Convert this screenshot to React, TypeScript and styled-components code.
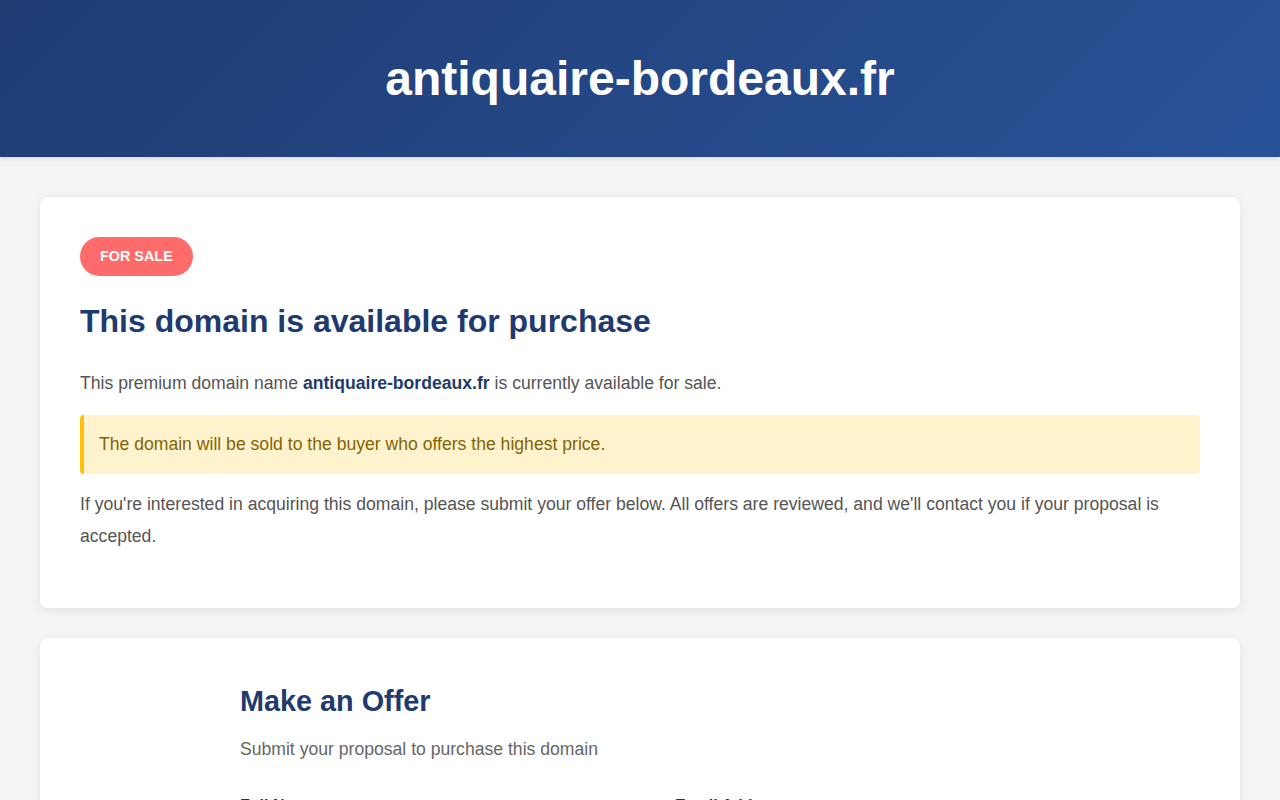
import React from "react";
import styled, { createGlobalStyle } from "styled-components";

const Global = createGlobalStyle`
  * { box-sizing: border-box; }
  body {
    margin: 0;
    background: #f4f4f4;
    font-family: "Liberation Sans", Arial, Helvetica, sans-serif;
    color: #333;
    line-height: 1.6;
  }
`;

const Header = styled.header`
  background: linear-gradient(135deg, #1e3c72 0%, #2a5298 100%);
  color: #fff;
  height: 157px;
  display: flex;
  align-items: center;
  justify-content: center;
  box-shadow: 0 2px 4px rgba(0, 0, 0, 0.1);
`;

const SiteTitle = styled.h1`
  margin: 0;
  font-size: 48px;
  font-weight: 700;
  line-height: 1.2;
`;

const Main = styled.main`
  max-width: 1280px;
  margin: 0 auto;
  padding: 40px 40px;
  display: flex;
  flex-direction: column;
  gap: 30px;
`;

const Card = styled.section`
  background: #fff;
  border-radius: 8px;
  box-shadow: 0 2px 10px rgba(0, 0, 0, 0.08);
  padding: 40px;
`;

const Badge = styled.span`
  display: inline-block;
  background: #ff6b6b;
  color: #fff;
  font-size: 14.4px;
  font-weight: 700;
  line-height: 18.7px;
  padding: 10px 20px;
  border-radius: 20px;
`;

const Heading = styled.h2`
  margin: 20px 0 21px;
  font-size: 32px;
  font-weight: 700;
  line-height: 1.6;
  color: #1e3a6e;
`;

const Text = styled.p`
  margin: 0 0 15px;
  font-size: 17.6px;
  line-height: 1.8;
  color: #555;
`;

const Strong = styled.strong`
  color: #1e3a6e;
`;

const Notice = styled.div`
  background: #fff3cd;
  border-left: 4px solid #ffc107;
  border-radius: 4px;
  padding: 14px 15px;
  font-size: 17.6px;
  line-height: 1.8;
  color: #856404;
  margin-bottom: 15px;
`;

const OfferInner = styled.div`
  max-width: 800px;
  margin: 0 auto;
`;

const OfferTitle = styled.h2`
  margin: 0 0 11px;
  font-size: 28.8px;
  font-weight: 700;
  line-height: 1.6;
  color: #1e3a6e;
`;

const Subtitle = styled.p`
  margin: 0 0 30px;
  font-size: 17.6px;
  line-height: 1.6;
  color: #666;
`;

const FormGrid = styled.div`
  display: grid;
  grid-template-columns: 1fr 1fr;
  gap: 20px 70px;
`;

const Field = styled.div`
  display: flex;
  flex-direction: column;
  gap: 8px;
`;

const Label = styled.label`
  font-size: 16px;
  font-weight: 700;
  line-height: 1.6;
  color: #333;
`;

const Input = styled.input`
  height: 46px;
  border: 1px solid #ddd;
  border-radius: 4px;
  padding: 0 14px;
  font-size: 16px;
  font-family: inherit;
`;

export default function App() {
  return (
    <>
      <Global />
      <Header>
        <SiteTitle>antiquaire-bordeaux.fr</SiteTitle>
      </Header>
      <Main>
        <Card>
          <Badge>FOR SALE</Badge>
          <Heading>This domain is available for purchase</Heading>
          <Text>
            This premium domain name <Strong>antiquaire-bordeaux.fr</Strong> is currently available for sale.
          </Text>
          <Notice>The domain will be sold to the buyer who offers the highest price.</Notice>
          <Text>
            If you're interested in acquiring this domain, please submit your offer below. All offers are
            reviewed, and we'll contact you if your proposal is accepted.
          </Text>
        </Card>
        <Card>
          <OfferInner>
            <OfferTitle>Make an Offer</OfferTitle>
            <Subtitle>Submit your proposal to purchase this domain</Subtitle>
            <FormGrid>
              <Field>
                <Label>Full Name</Label>
                <Input type="text" />
              </Field>
              <Field>
                <Label>Email Address</Label>
                <Input type="email" />
              </Field>
            </FormGrid>
          </OfferInner>
        </Card>
      </Main>
    </>
  );
}
